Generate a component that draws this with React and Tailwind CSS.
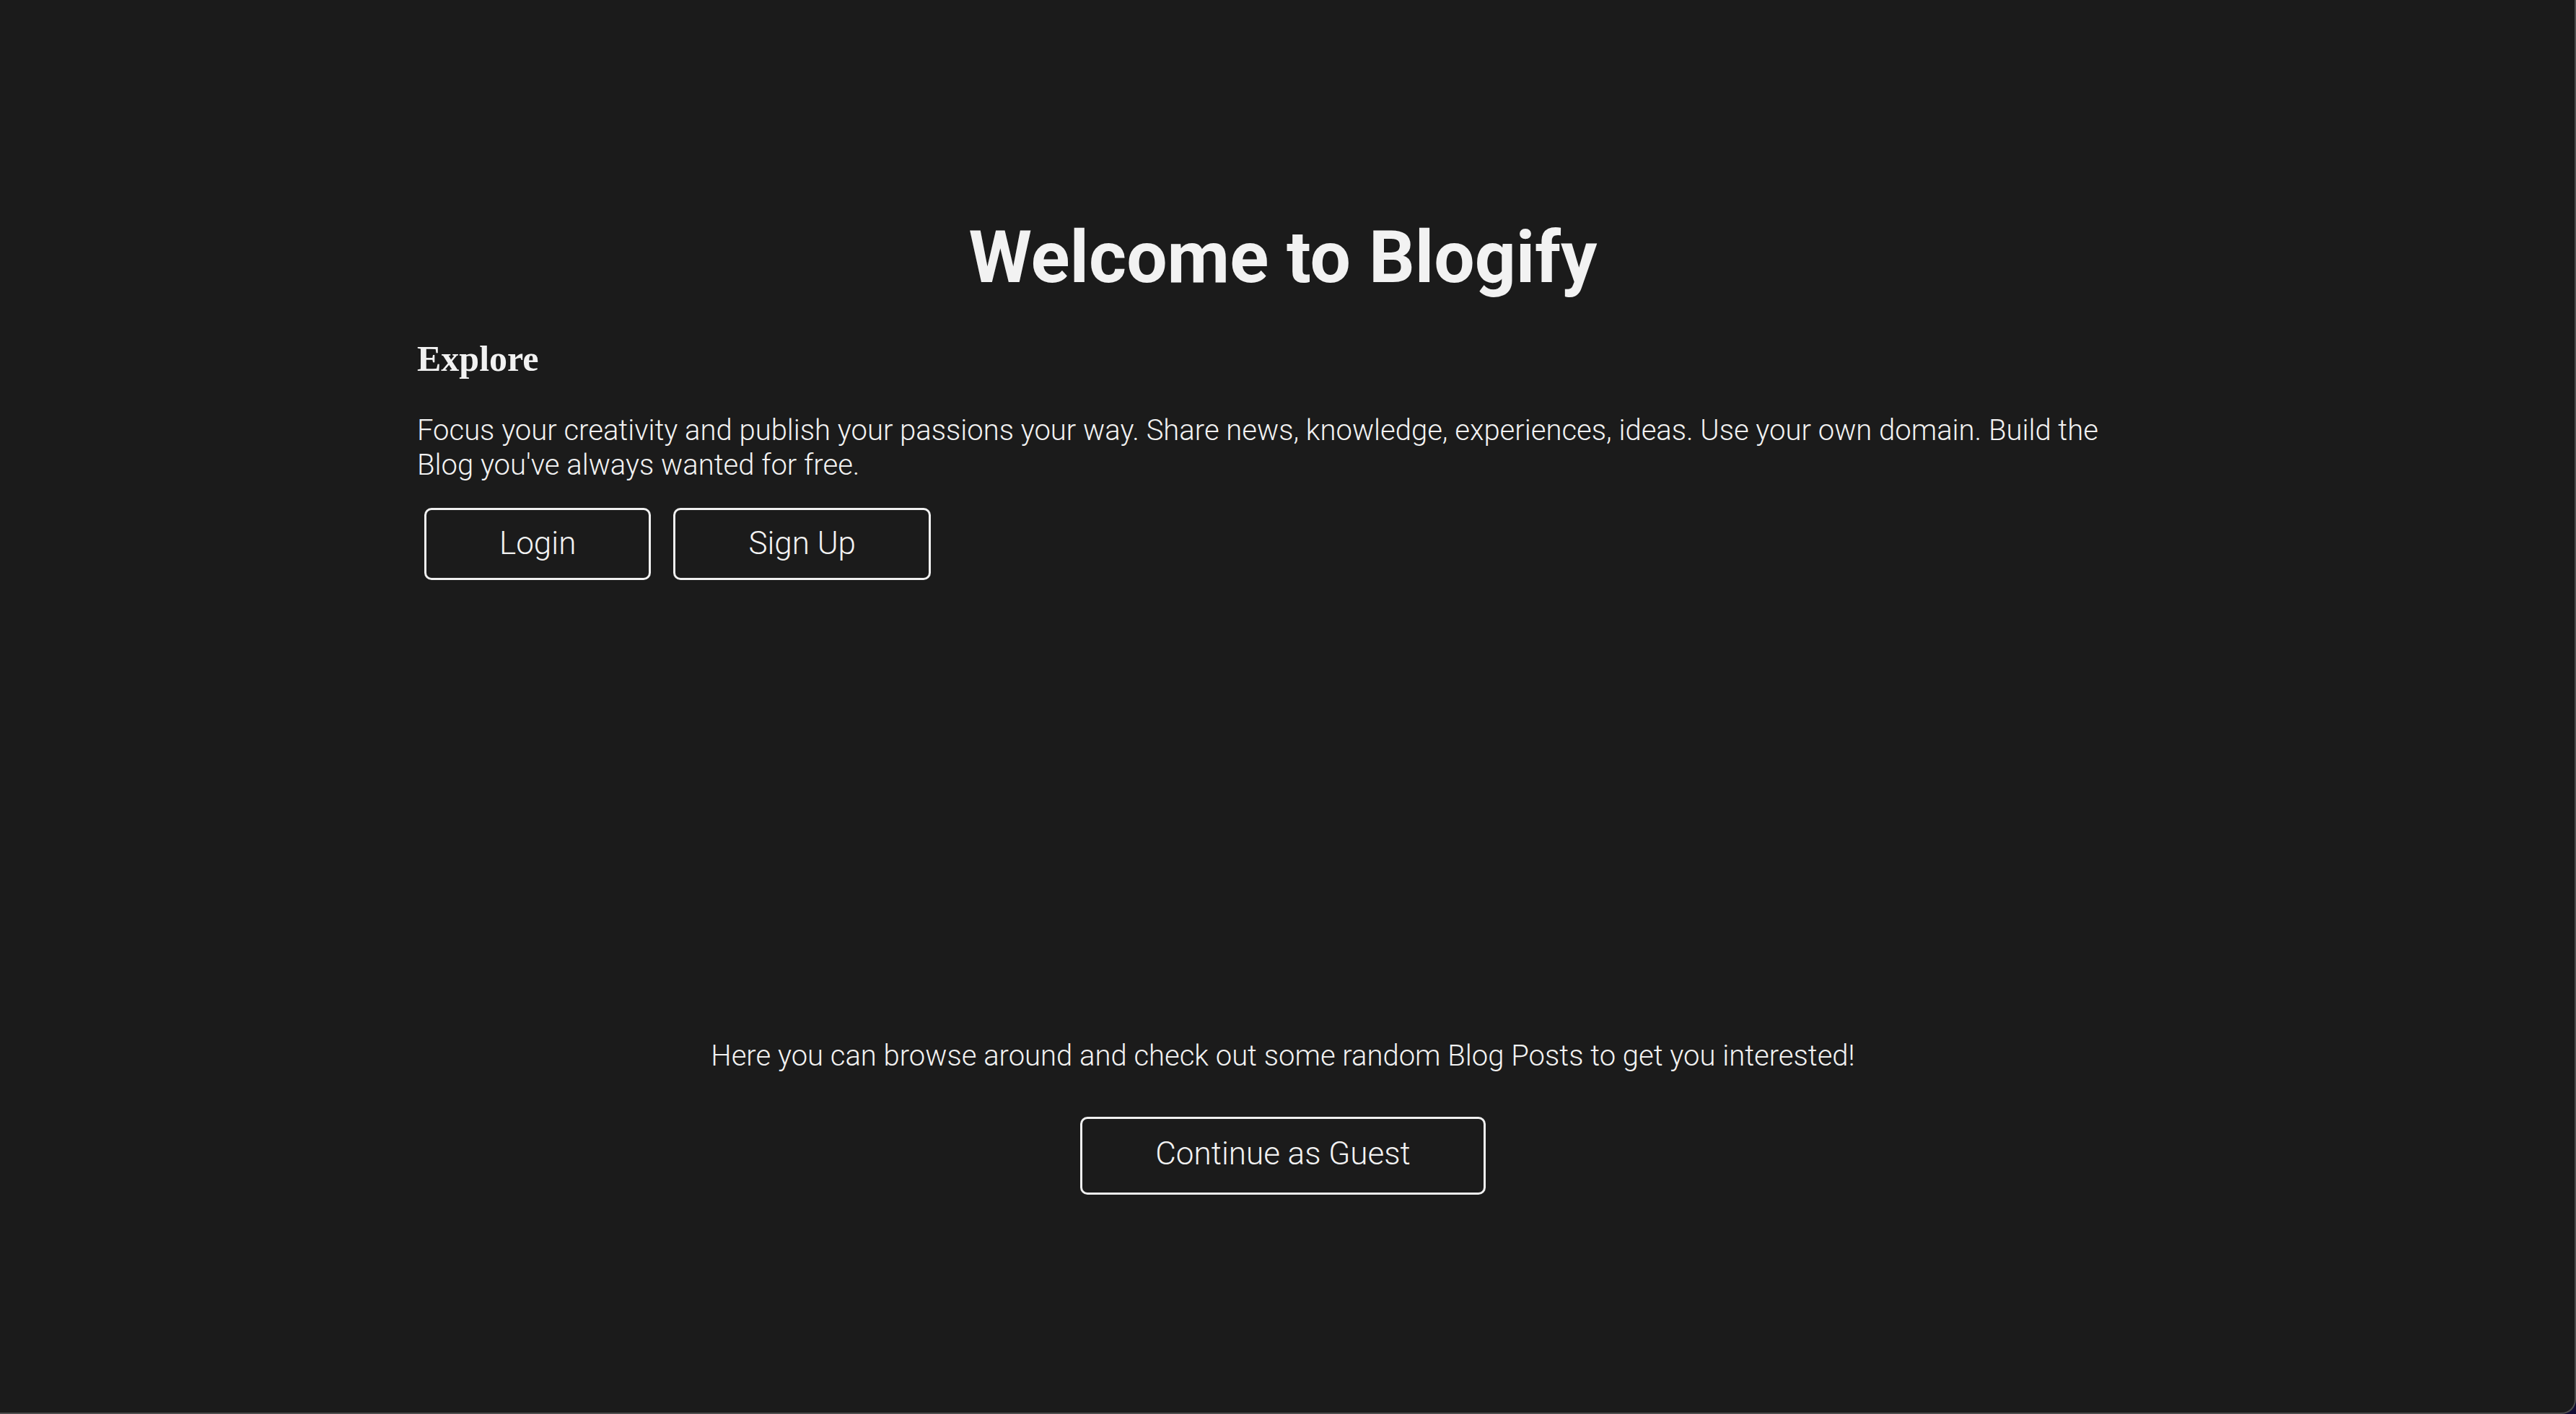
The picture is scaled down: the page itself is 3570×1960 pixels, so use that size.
const buttonClass =
  "rounded-[10px] border-[3px] border-[#f0f0f0] bg-[#1b1b1b] px-[101px] text-[44px] leading-[51px] font-light text-[#f2f2f2]";

const App = () => {
  return (
    <div className="h-screen w-full bg-[#120d33]">
      <div
        className="h-full w-full overflow-hidden rounded-br-[20px] border-r-2 border-b-2 border-[#4d4d4d] bg-[#1b1b1b] pr-[12px] text-[#f2f2f2]"
        style={{ fontFamily: "Roboto, 'Liberation Sans', sans-serif" }}
      >
        <main className="mx-auto w-[2400px] pt-[297px]">
          {/* Hero */}
          <h1 className="text-center text-[100px] leading-[1.2] font-bold">
            Welcome to Blogify
          </h1>

          <h2 className="mt-[55px] font-['Liberation_Serif',serif] text-[50px] leading-none font-bold">
            Explore
          </h2>

          <p className="mt-[51px] text-[40px] leading-[48px] font-light">
            Focus your creativity and publish your passions your way. Share news, knowledge, experiences, ideas. Use your
            own domain. Build the Blog you've always wanted for free.
          </p>

          <div className="mt-[35px] ml-[10px] flex gap-[31px]">
            <button className={`${buttonClass} pt-[21px] pb-[22px]`}>Login</button>
            <button className={`${buttonClass} pt-[21px] pb-[22px]`}>Sign Up</button>
          </div>

          {/* Guest section */}
          <div className="mt-[636px] flex flex-col items-center">
            <p className="text-center text-[40px] leading-[48px] font-light">
              Here you can browse around and check out some random Blog Posts to get you interested!
            </p>
            <button className={`${buttonClass} mt-[60px] pt-[23px] pb-[28px]`}>Continue as Guest</button>
          </div>
        </main>
      </div>
    </div>
  );
};

export default App;
